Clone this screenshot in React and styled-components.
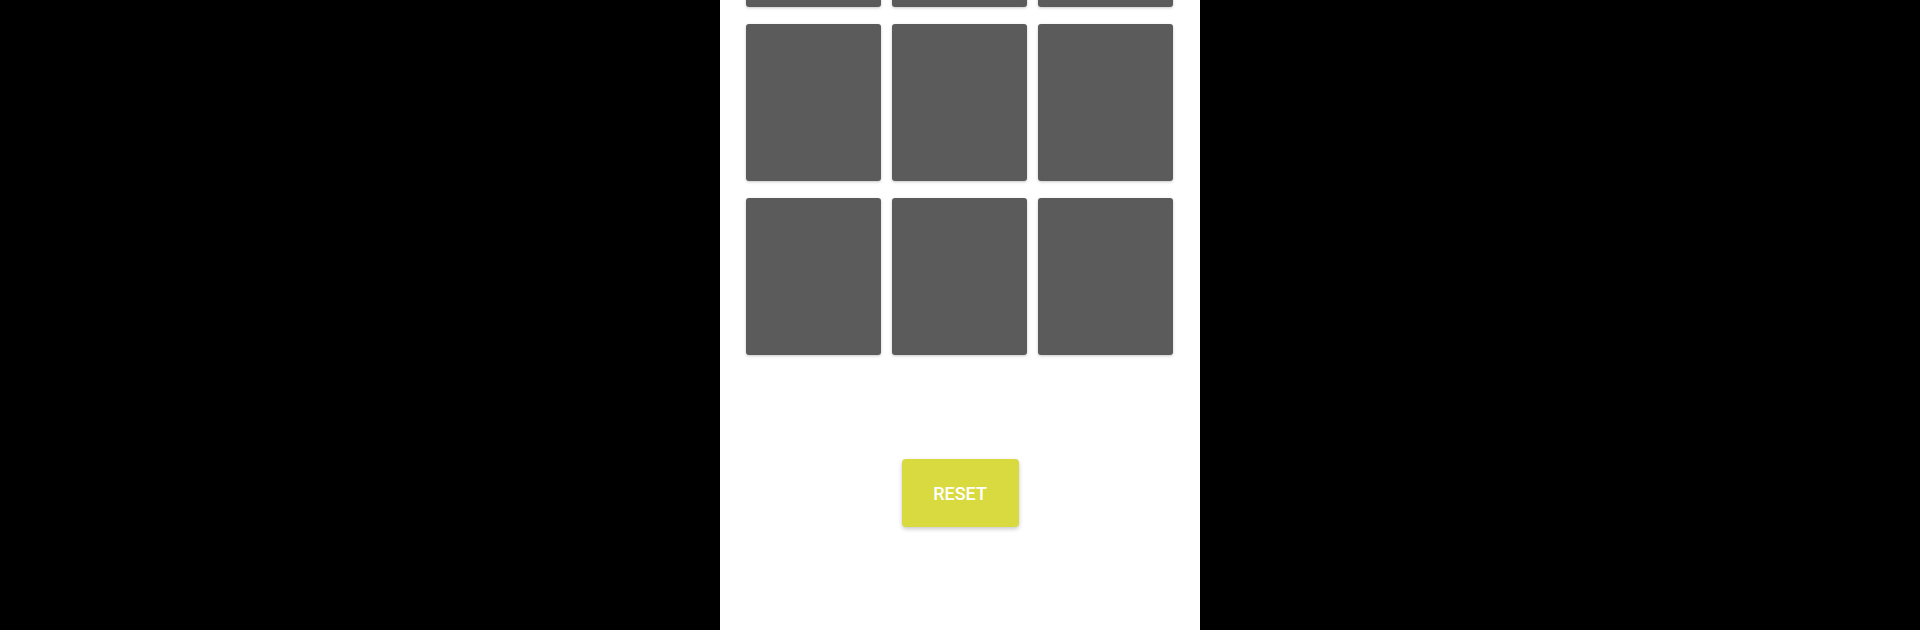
import React from "react";
import styled, { createGlobalStyle } from "styled-components";

const GlobalStyle = createGlobalStyle`
  html, body {
    margin: 0;
    padding: 0;
    background: #000;
    height: 100%;
    overflow: hidden;
  }
  #root {
    height: 100%;
  }
`;

const Page = styled.div`
  height: 630px;
  display: flex;
  justify-content: center;
  background: #000;
`;

const Screen = styled.div`
  width: 480px;
  height: 630px;
  background: #fff;
  overflow: hidden;
  display: flex;
  flex-direction: column;
  align-items: center;
`;

const Board = styled.div`
  margin-top: -150px;
  padding: 0 27px 0 26px;
  display: grid;
  grid-template-columns: repeat(3, 135px);
  grid-auto-rows: 157px;
  column-gap: 11px;
  row-gap: 17px;
`;

const Tile = styled.div`
  background: #5b5b5c;
  border-radius: 3px;
  box-shadow: 0 1px 3px rgba(0, 0, 0, 0.22);
`;

const ResetButton = styled.button`
  margin-top: 104px;
  width: 117px;
  height: 68px;
  border: none;
  border-radius: 4px;
  background: #d9da3f;
  color: #fff;
  font-family: Roboto, "Liberation Sans", sans-serif;
  font-weight: 500;
  font-size: 18px;
  box-shadow: 0 2px 4px rgba(0, 0, 0, 0.22);
  cursor: pointer;
`;

export default function App() {
  const tiles = Array.from({ length: 9 });
  return (
    <>
      <GlobalStyle />
      <Page>
        <Screen>
          <Board>
            {tiles.map((_, i) => (
              <Tile key={i} />
            ))}
          </Board>
          <ResetButton>RESET</ResetButton>
        </Screen>
      </Page>
    </>
  );
}
